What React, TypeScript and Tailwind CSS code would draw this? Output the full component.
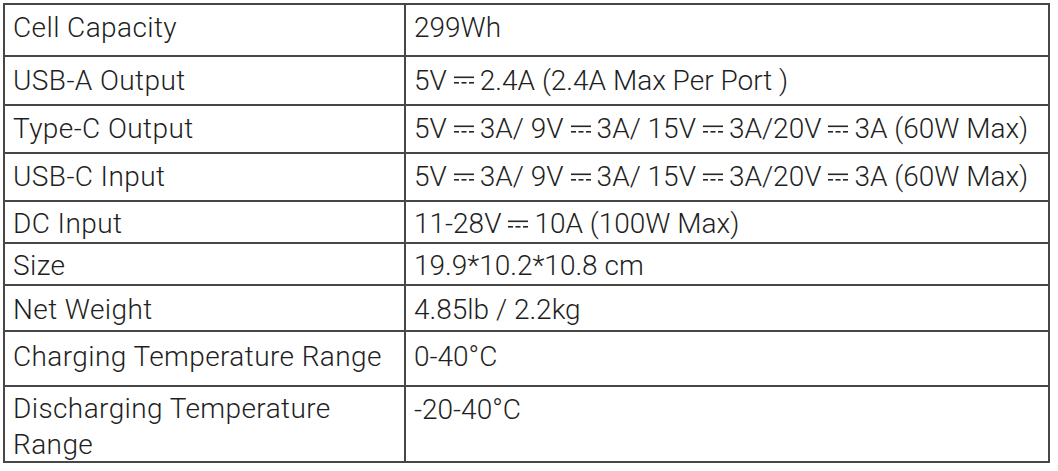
import React from "react";

const DC = () => (
  <svg
    width="20"
    height="8"
    viewBox="0 0 20 8"
    className="inline-block ml-[7px] mr-[6px] align-middle relative -top-[2px]"
    aria-hidden="true"
  >
    <rect x="0" y="0.5" width="20" height="1.6" fill="#262626" />
    <rect x="0" y="6" width="5" height="1.6" fill="#262626" />
    <rect x="7.5" y="6" width="5" height="1.6" fill="#262626" />
    <rect x="15" y="6" width="5" height="1.6" fill="#262626" />
  </svg>
);

type Row = {
  label: React.ReactNode;
  value: React.ReactNode;
  h: string;
  pad: string;
  top?: boolean;
};

const rows: Row[] = [
  { label: "Cell Capacity", value: "299Wh", h: "h-[50px]", pad: "pb-[5px]" },
  {
    label: "USB-A Output",
    value: (
      <>
        5V<DC />2.4A (2.4A Max Per Port )
      </>
    ),
    h: "h-[49px]",
    pad: "",
  },
  {
    label: "Type-C Output",
    value: (
      <>
        5V<DC />3A/ 9V<DC />3A/ 15V<DC />3A/20V<DC />3A (60W Max)
      </>
    ),
    h: "h-[48px]",
    pad: "",
  },
  {
    label: "USB-C Input",
    value: (
      <>
        5V<DC />3A/ 9V<DC />3A/ 15V<DC />3A/20V<DC />3A (60W Max)
      </>
    ),
    h: "h-[48px]",
    pad: "",
  },
  {
    label: "DC Input",
    value: (
      <>
        11-28V<DC />10A (100W Max)
      </>
    ),
    h: "h-[42px]",
    pad: "pt-[4px]",
  },
  { label: "Size", value: "19.9*10.2*10.8 cm", h: "h-[42px]", pad: "pt-[4px]" },
  { label: "Net Weight", value: "4.85lb / 2.2kg", h: "h-[46px]", pad: "pt-[4px]" },
  {
    label: "Charging Temperature Range",
    value: "0-40°C",
    h: "h-[55px]",
    pad: "pb-[4px]",
  },
  {
    label: (
      <>
        Discharging Temperature
        <br />
        Range
      </>
    ),
    value: "-20-40°C",
    h: "h-[76px]",
    pad: "pt-[6px]",
    top: true,
  },
];

export default function App() {
  return (
    <div className="w-[1058px] h-[471px] bg-white pt-[3px] pl-[3px]">
      <div
        className="w-[1047px] border-2 border-[#474747] text-[#1f1f1f] text-[28px] font-light"
        style={{ fontFamily: "Roboto, 'Liberation Sans', sans-serif" }}
      >
        {rows.map((r, i) => (
          <div
            key={i}
            className={`flex ${r.h} ${i > 0 ? "border-t-2 border-[#474747]" : ""}`}
          >
            <div
              className={`w-[401px] shrink-0 border-r-2 border-[#474747] flex items-center pl-[8px] leading-[36px] whitespace-nowrap tracking-[0.4px] ${r.pad}`}
            >
              <div>{r.label}</div>
            </div>
            <div
              className={`flex-1 flex pl-[8px] leading-[36px] whitespace-nowrap ${
                r.top ? "items-start pt-[5px]" : `items-center ${r.pad}`
              }`}
            >
              <div>{r.value}</div>
            </div>
          </div>
        ))}
      </div>
    </div>
  );
}
